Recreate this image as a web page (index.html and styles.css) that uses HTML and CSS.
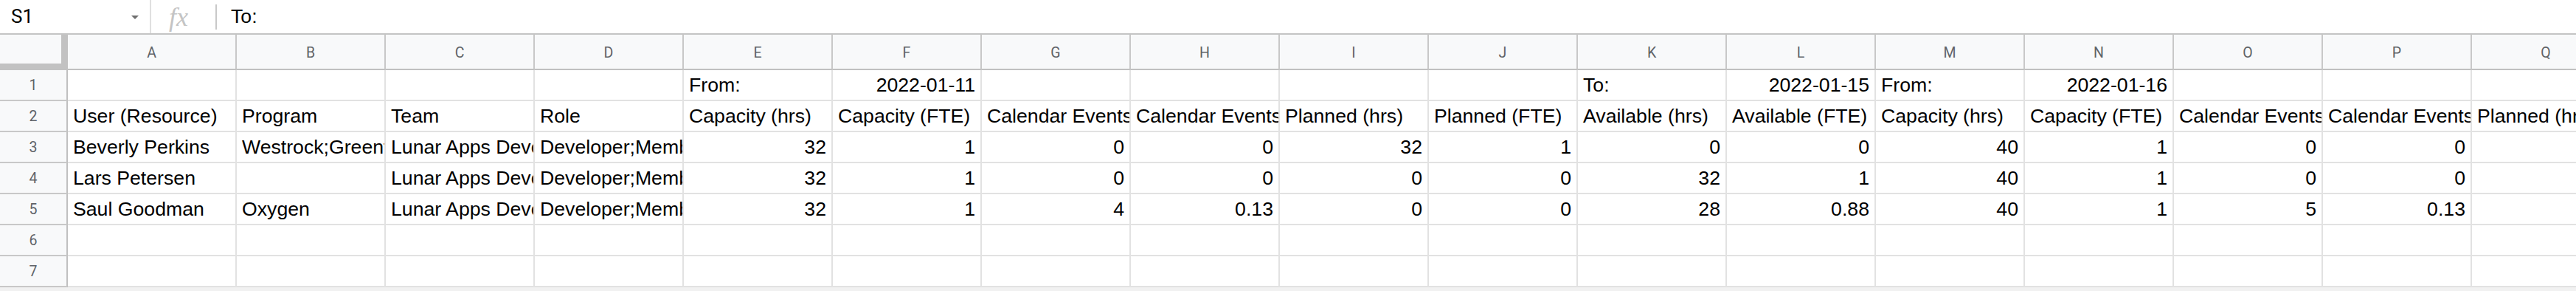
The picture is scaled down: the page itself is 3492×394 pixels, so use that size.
FILE: index.html
```html
<!DOCTYPE html>
<html>
<head>
<meta charset="utf-8">
<link rel="stylesheet" href="styles.css">
</head>
<body>
<div class="formula-bar">
  <div class="name-box"><span class="name-text">S1</span><span class="caret"></span></div>
  <div class="fx">fx</div>
  <div class="formula-text">To:</div>
</div>
<div class="sheet">
  <div class="corner"></div>
  <div class="ch">A</div><div class="ch">B</div><div class="ch">C</div><div class="ch">D</div><div class="ch">E</div><div class="ch">F</div><div class="ch">G</div><div class="ch">H</div><div class="ch">I</div><div class="ch">J</div><div class="ch">K</div><div class="ch">L</div><div class="ch">M</div><div class="ch">N</div><div class="ch">O</div><div class="ch">P</div><div class="ch">Q</div>

  <div class="rh">1</div>
  <div class="c"></div><div class="c"></div><div class="c"></div><div class="c"></div><div class="c">From:</div><div class="c n">2022-01-11</div><div class="c"></div><div class="c"></div><div class="c"></div><div class="c"></div><div class="c">To:</div><div class="c n">2022-01-15</div><div class="c">From:</div><div class="c n">2022-01-16</div><div class="c"></div><div class="c"></div><div class="c"></div>

  <div class="rh">2</div>
  <div class="c">User (Resource)</div><div class="c">Program</div><div class="c">Team</div><div class="c">Role</div><div class="c">Capacity (hrs)</div><div class="c">Capacity (FTE)</div><div class="c">Calendar Events</div><div class="c">Calendar Events</div><div class="c">Planned (hrs)</div><div class="c">Planned (FTE)</div><div class="c">Available (hrs)</div><div class="c">Available (FTE)</div><div class="c">Capacity (hrs)</div><div class="c">Capacity (FTE)</div><div class="c">Calendar Events</div><div class="c">Calendar Events</div><div class="c">Planned (hrs)</div>

  <div class="rh">3</div>
  <div class="c">Beverly Perkins</div><div class="c">Westrock;Greenfield</div><div class="c">Lunar Apps Developers</div><div class="c">Developer;Member</div><div class="c n">32</div><div class="c n">1</div><div class="c n">0</div><div class="c n">0</div><div class="c n">32</div><div class="c n">1</div><div class="c n">0</div><div class="c n">0</div><div class="c n">40</div><div class="c n">1</div><div class="c n">0</div><div class="c n">0</div><div class="c"></div>

  <div class="rh">4</div>
  <div class="c">Lars Petersen</div><div class="c"></div><div class="c">Lunar Apps Developers</div><div class="c">Developer;Member</div><div class="c n">32</div><div class="c n">1</div><div class="c n">0</div><div class="c n">0</div><div class="c n">0</div><div class="c n">0</div><div class="c n">32</div><div class="c n">1</div><div class="c n">40</div><div class="c n">1</div><div class="c n">0</div><div class="c n">0</div><div class="c"></div>

  <div class="rh">5</div>
  <div class="c">Saul Goodman</div><div class="c">Oxygen</div><div class="c">Lunar Apps Developers</div><div class="c">Developer;Member</div><div class="c n">32</div><div class="c n">1</div><div class="c n">4</div><div class="c n">0.13</div><div class="c n">0</div><div class="c n">0</div><div class="c n">28</div><div class="c n">0.88</div><div class="c n">40</div><div class="c n">1</div><div class="c n">5</div><div class="c n">0.13</div><div class="c"></div>

  <div class="rh">6</div>
  <div class="c"></div><div class="c"></div><div class="c"></div><div class="c"></div><div class="c"></div><div class="c"></div><div class="c"></div><div class="c"></div><div class="c"></div><div class="c"></div><div class="c"></div><div class="c"></div><div class="c"></div><div class="c"></div><div class="c"></div><div class="c"></div><div class="c"></div>

  <div class="rh">7</div>
  <div class="c"></div><div class="c"></div><div class="c"></div><div class="c"></div><div class="c"></div><div class="c"></div><div class="c"></div><div class="c"></div><div class="c"></div><div class="c"></div><div class="c"></div><div class="c"></div><div class="c"></div><div class="c"></div><div class="c"></div><div class="c"></div><div class="c"></div>
</div>
<div class="scroll-strip"></div>
</body>
</html>
```
FILE: styles.css
```css
html, body {
  margin: 0;
  padding: 0;
  background: #ffffff;
  overflow: hidden;
}
body {
  width: 3492px;
  height: 394px;
  font-family: "Liberation Sans", Arial, sans-serif;
  color: #000;
}

.formula-bar {
  display: flex;
  align-items: stretch;
  height: 47px;
  box-sizing: border-box;
  border-bottom: 2px solid #c4c4c4;
}
.name-box {
  width: 205px;
  box-sizing: border-box;
  border-right: 2px solid #e0e0e0;
  display: flex;
  align-items: center;
  padding-left: 15px;
  padding-right: 15px;
}
.name-text {
  flex: 1;
  font-family: Roboto, "Liberation Sans", sans-serif;
  font-size: 26px;
  line-height: 45px;
  color: #000;
}
.caret {
  width: 0;
  height: 0;
  border-left: 5px solid transparent;
  border-right: 5px solid transparent;
  border-top: 5px solid #707070;
  margin-top: 2px;
}
.fx {
  width: 89px;
  box-sizing: border-box;
  padding-left: 24px;
  font-family: "Liberation Serif", serif;
  font-style: italic;
  font-size: 36px;
  line-height: 40px;
  color: #c4c4c4;
  display: flex;
  align-items: center;
}
.fx::after {
  content: "";
  width: 2px;
  height: 34px;
  background: #c8c8c8;
  margin-left: auto;
}
.formula-text {
  padding-left: 19px;
  font-size: 26.67px;
  line-height: 45px;
}

.sheet {
  display: grid;
  grid-template-columns: 92px 229px repeat(16, 202px);
  grid-template-rows: 48px repeat(7, 42px);
  width: 3492px;
  overflow: hidden;
}
.corner {
  background: #f8f9fa;
  box-sizing: border-box;
  border-right: 9px solid #c2c2c2;
  border-bottom: 9px solid #c2c2c2;
}
.ch, .rh {
  background: #f8f9fa;
  box-sizing: border-box;
  font-family: Roboto, "Liberation Sans", sans-serif;
  font-size: 19.5px;
  color: #5f6368;
  display: flex;
  align-items: center;
  justify-content: center;
}
.ch {
  border-right: 2px solid #c8c8c8;
  border-bottom: 2px solid #c0c0c0;
  padding-top: 2px;
}
.rh {
  border-right: 2px solid #c0c0c0;
  border-bottom: 2px solid #c8c8c8;
}
.c {
  box-sizing: border-box;
  border-right: 2px solid #e2e2e2;
  border-bottom: 2px solid #e2e2e2;
  padding: 0 7px;
  font-size: 26.67px;
  line-height: 40px;
  white-space: nowrap;
  overflow: hidden;
  text-overflow: clip;
}
.n {
  text-align: right;
}
.scroll-strip {
  height: 5px;
  background: #f1f1f1;
}
```
